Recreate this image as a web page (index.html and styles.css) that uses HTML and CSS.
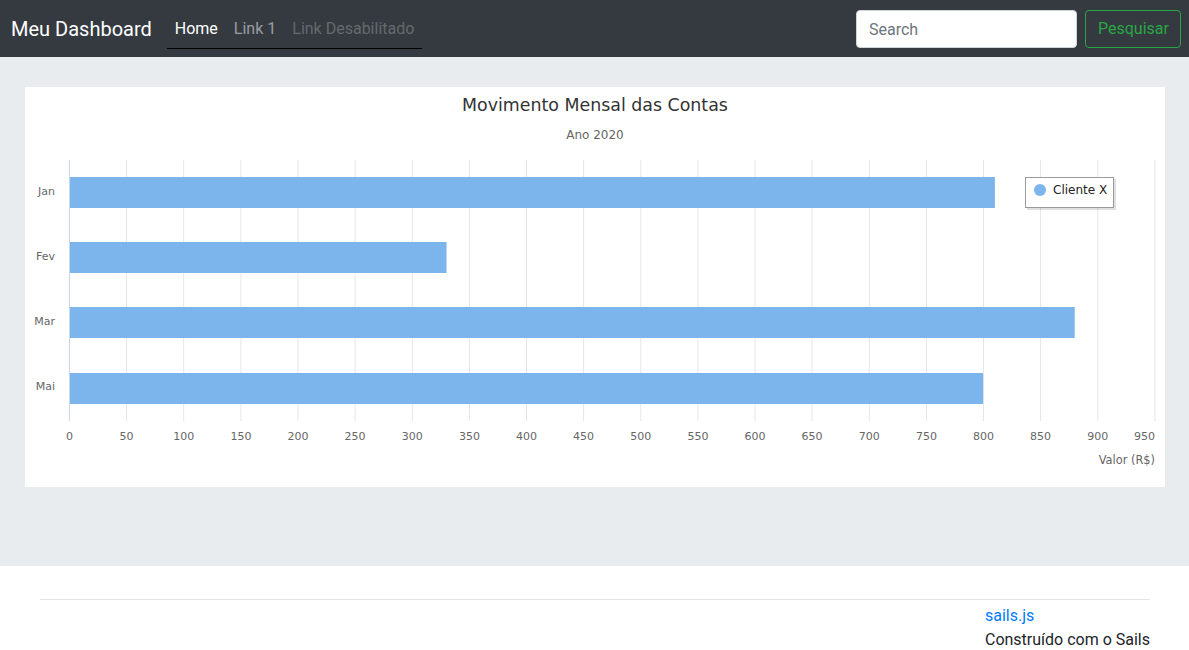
FILE: index.html
```html
<!DOCTYPE html>
<html lang="pt">
<head>
<meta charset="utf-8">
<title>Meu Dashboard</title>
<link rel="stylesheet" href="styles.css">
</head>
<body>
<nav class="navbar">
  <a class="brand" href="#">Meu Dashboard</a>
  <ul class="nav">
    <li><a class="nav-link active" href="#">Home</a></li>
    <li><a class="nav-link" href="#">Link 1</a></li>
    <li><a class="nav-link disabled" href="#">Link Desabilitado</a></li>
  </ul>
  <form class="search">
    <input class="search-input" type="text" placeholder="Search">
    <button class="search-btn" type="button">Pesquisar</button>
  </form>
</nav>
<main class="main">
  <div class="card">
    <svg class="chart" width="1140" height="400" viewBox="0 0 1140 400">
      <text x="570" y="23.5" class="c-title" text-anchor="middle">Movimento Mensal das Contas</text>
      <text x="570" y="52" class="c-sub" text-anchor="middle">Ano 2020</text>
      <g class="grid">
        <line x1="101.6" y1="73" x2="101.6" y2="334"/>
        <line x1="158.7" y1="73" x2="158.7" y2="334"/>
        <line x1="215.9" y1="73" x2="215.9" y2="334"/>
        <line x1="273" y1="73" x2="273" y2="334"/>
        <line x1="330.1" y1="73" x2="330.1" y2="334"/>
        <line x1="387.3" y1="73" x2="387.3" y2="334"/>
        <line x1="444.4" y1="73" x2="444.4" y2="334"/>
        <line x1="501.5" y1="73" x2="501.5" y2="334"/>
        <line x1="558.6" y1="73" x2="558.6" y2="334"/>
        <line x1="615.8" y1="73" x2="615.8" y2="334"/>
        <line x1="672.9" y1="73" x2="672.9" y2="334"/>
        <line x1="730" y1="73" x2="730" y2="334"/>
        <line x1="787.1" y1="73" x2="787.1" y2="334"/>
        <line x1="844.3" y1="73" x2="844.3" y2="334"/>
        <line x1="901.4" y1="73" x2="901.4" y2="334"/>
        <line x1="958.5" y1="73" x2="958.5" y2="334"/>
        <line x1="1015.6" y1="73" x2="1015.6" y2="334"/>
        <line x1="1072.8" y1="73" x2="1072.8" y2="334"/>
        <line x1="1129.9" y1="73" x2="1129.9" y2="334"/>
      </g>
      <g class="bars">
        <rect x="44.5" y="90" width="925.4" height="31"/>
        <rect x="44.5" y="155" width="377" height="31"/>
        <rect x="44.5" y="220" width="1005.2" height="31"/>
        <rect x="44.5" y="286" width="913.6" height="31"/>
      </g>
      <line class="axis" x1="44.5" y1="73" x2="44.5" y2="334"/>
      <g class="ylab" text-anchor="end">
        <text x="30" y="108">Jan</text>
        <text x="30" y="173">Fev</text>
        <text x="30" y="238">Mar</text>
        <text x="30" y="303">Mai</text>
      </g>
      <g class="xlab" text-anchor="middle">
        <text x="44.5" y="353">0</text>
        <text x="101.6" y="353">50</text>
        <text x="158.7" y="353">100</text>
        <text x="215.9" y="353">150</text>
        <text x="273" y="353">200</text>
        <text x="330.1" y="353">250</text>
        <text x="387.3" y="353">300</text>
        <text x="444.4" y="353">350</text>
        <text x="501.5" y="353">400</text>
        <text x="558.6" y="353">450</text>
        <text x="615.8" y="353">500</text>
        <text x="672.9" y="353">550</text>
        <text x="730" y="353">600</text>
        <text x="787.1" y="353">650</text>
        <text x="844.3" y="353">700</text>
        <text x="901.4" y="353">750</text>
        <text x="958.5" y="353">800</text>
        <text x="1015.6" y="353">850</text>
        <text x="1072.8" y="353">900</text>
        <text x="1130" y="353" text-anchor="end">950</text>
      </g>
      <text class="xtitle" x="1130" y="377" text-anchor="end">Valor (R$)</text>
      <g class="legend">
        <rect class="leg-shadow" x="1002" y="92" width="89" height="31"/>
        <rect class="leg-box" x="1000.5" y="90.5" width="88" height="30"/>
        <circle cx="1015" cy="103" r="6"/>
        <text x="1028" y="107">Cliente X</text>
      </g>
    </svg>
  </div>
</main>
<footer class="footer">
  <hr class="rule">
  <div class="foot-row">
    <div class="foot-col">
      <a class="foot-link" href="#">sails.js</a>
      <p class="foot-text">Construído com o Sails</p>
    </div>
  </div>
</footer>
</body>
</html>
```

FILE: styles.css
```css
* { box-sizing: border-box; }
html, body { margin: 0; padding: 0; }
body {
  font-family: Roboto, "Liberation Sans", sans-serif;
  font-size: 16px;
  line-height: 1.5;
  color: #212529;
  background: #fff;
}
a { text-decoration: none; }

.navbar {
  display: flex;
  align-items: center;
  height: 57px;
  padding: 0 8px 0 11px;
  background: #343a40;
}
.brand {
  color: #fff;
  font-size: 20px;
  line-height: 30px;
  margin-right: 15px;
}
.nav {
  display: flex;
  align-self: flex-start;
  list-style: none;
  margin: 0;
  padding: 0;
  height: 49px;
  border-bottom: 1px solid #000;
}
.nav li { display: block; }
.nav-link {
  display: block;
  padding: 8px 8px;
  line-height: 24px;
  color: rgba(255,255,255,.5);
  margin-top: 9px;
}
.nav-link.active { color: #fff; }
.nav-link.disabled { color: rgba(255,255,255,.25); }

.search {
  display: flex;
  align-items: center;
  margin-left: auto;
  margin-top: 1px;
}
.search-input {
  width: 221px;
  height: 38px;
  padding: 6px 12px;
  font: inherit;
  font-size: 16px;
  color: #495057;
  background: #fff;
  border: 1px solid #ced4da;
  border-radius: 4px;
  margin-right: 8px;
}
.search-input::placeholder { color: #6c757d; }
.search-btn {
  height: 38px;
  width: 96px;
  padding: 6px 12px;
  font: inherit;
  font-size: 16px;
  color: #28a745;
  background: transparent;
  border: 1px solid #28a745;
  border-radius: 4px;
}

.main {
  background: #e9ecef;
  height: 509px;
  padding-top: 30px;
}
.card {
  width: 1140px;
  height: 400px;
  margin: 0 auto 0 25px;
  background: #fff;
}
.chart { display: block; font-family: "DejaVu Sans", Verdana, sans-serif; }
.c-title { font-size: 17.4px; fill: #333; }
.c-sub { font-size: 12px; fill: #666; }
.grid line { stroke: #e6e6e6; stroke-width: 1; }
.bars rect { fill: #7cb5ec; }
.axis { stroke: #ccd6eb; stroke-width: 1; }
.ylab text, .xlab text { font-size: 11px; fill: #666; }
.xtitle { font-size: 11.4px; fill: #666; }
.leg-shadow { fill: rgba(0,0,0,.12); }
.leg-box { fill: #fff; stroke: #999; stroke-width: 1; }
.legend circle { fill: #7cb5ec; }
.legend text { font-size: 12px; font-weight: normal; fill: #222; }

.footer {
  padding: 33px 39px 0 40px;
}
.rule {
  margin: 0;
  border: 0;
  border-top: 1px solid rgba(0,0,0,.1);
}
.foot-row {
  display: flex;
  justify-content: flex-end;
  padding-top: 4px;
}
.foot-col { display: flex; flex-direction: column; }
.foot-link { color: #007bff; line-height: 24px; }
.foot-text { margin: 0; line-height: 24px; }
```
